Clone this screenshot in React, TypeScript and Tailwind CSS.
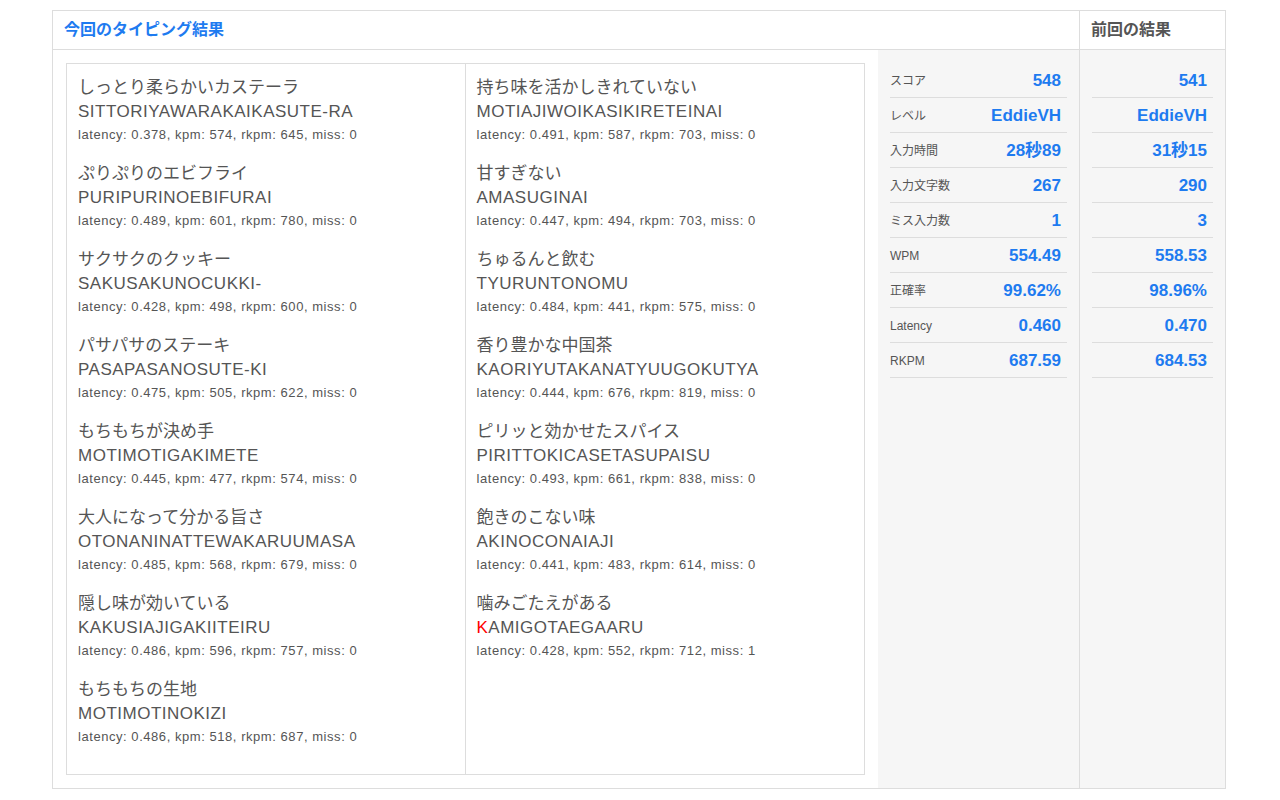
import React from 'react';

const left = [
  { jp: 'しっとり柔らかいカステーラ', ro: 'SITTORIYAWARAKAIKASUTE-RA', st: 'latency: 0.378, kpm: 574, rkpm: 645, miss: 0' },
  { jp: 'ぷりぷりのエビフライ', ro: 'PURIPURINOEBIFURAI', st: 'latency: 0.489, kpm: 601, rkpm: 780, miss: 0' },
  { jp: 'サクサクのクッキー', ro: 'SAKUSAKUNOCUKKI-', st: 'latency: 0.428, kpm: 498, rkpm: 600, miss: 0' },
  { jp: 'パサパサのステーキ', ro: 'PASAPASANOSUTE-KI', st: 'latency: 0.475, kpm: 505, rkpm: 622, miss: 0' },
  { jp: 'もちもちが決め手', ro: 'MOTIMOTIGAKIMETE', st: 'latency: 0.445, kpm: 477, rkpm: 574, miss: 0' },
  { jp: '大人になって分かる旨さ', ro: 'OTONANINATTEWAKARUUMASA', st: 'latency: 0.485, kpm: 568, rkpm: 679, miss: 0' },
  { jp: '隠し味が効いている', ro: 'KAKUSIAJIGAKIITEIRU', st: 'latency: 0.486, kpm: 596, rkpm: 757, miss: 0' },
  { jp: 'もちもちの生地', ro: 'MOTIMOTINOKIZI', st: 'latency: 0.486, kpm: 518, rkpm: 687, miss: 0' },
];

const right = [
  { jp: '持ち味を活かしきれていない', ro: 'MOTIAJIWOIKASIKIRETEINAI', st: 'latency: 0.491, kpm: 587, rkpm: 703, miss: 0' },
  { jp: '甘すぎない', ro: 'AMASUGINAI', st: 'latency: 0.447, kpm: 494, rkpm: 703, miss: 0' },
  { jp: 'ちゅるんと飲む', ro: 'TYURUNTONOMU', st: 'latency: 0.484, kpm: 441, rkpm: 575, miss: 0' },
  { jp: '香り豊かな中国茶', ro: 'KAORIYUTAKANATYUUGOKUTYA', st: 'latency: 0.444, kpm: 676, rkpm: 819, miss: 0' },
  { jp: 'ピリッと効かせたスパイス', ro: 'PIRITTOKICASETASUPAISU', st: 'latency: 0.493, kpm: 661, rkpm: 838, miss: 0' },
  { jp: '飽きのこない味', ro: 'AKINOCONAIAJI', st: 'latency: 0.441, kpm: 483, rkpm: 614, miss: 0' },
  { jp: '噛みごたえがある', ro: 'KAMIGOTAEGAARU', st: 'latency: 0.428, kpm: 552, rkpm: 712, miss: 1', missIdx: 0 },
];

const stats = [
  { label: 'スコア', now: '548', prev: '541' },
  { label: 'レベル', now: 'EddieVH', prev: 'EddieVH' },
  { label: '入力時間', now: '28秒89', prev: '31秒15' },
  { label: '入力文字数', now: '267', prev: '290' },
  { label: 'ミス入力数', now: '1', prev: '3' },
  { label: 'WPM', now: '554.49', prev: '558.53' },
  { label: '正確率', now: '99.62%', prev: '98.96%' },
  { label: 'Latency', now: '0.460', prev: '0.470' },
  { label: 'RKPM', now: '687.59', prev: '684.53' },
];

type Word = { jp: string; ro: string; st: string; missIdx?: number };

const WordItem = ({ w }: { w: Word }) => (
  <div className="mb-[16px]">
    <div className="text-[17px] leading-[24px] text-[#555]">{w.jp}</div>
    <div className="text-[17px] leading-[24px] tracking-[0.5px] text-[#555]">
      {w.missIdx === undefined ? (
        w.ro
      ) : (
        <>
          <span className="text-[#f00]">{w.ro.slice(0, 1)}</span>
          {w.ro.slice(1)}
        </>
      )}
    </div>
    <div className="text-[13px] leading-[22px] tracking-[0.55px] text-[#555]">{w.st}</div>
  </div>
);

export default function App() {
  return (
    <div
      className="min-h-[800px] bg-white pt-[10px] pl-[52px]"
      style={{ fontFamily: '"Liberation Sans", "Noto Sans CJK JP", sans-serif' }}
    >
      <div className="flex w-[1174px] border border-[#ddd]">
        {/* 今回 */}
        <div className="flex w-[1026px] flex-col">
          <div className="flex h-[39px] items-center border-b border-[#ddd] pl-[11px] text-[16px] font-bold text-[#1e7bf0]">
            今回のタイピング結果
          </div>
          <div className="flex">
            <div className="w-[825px] px-[13px] pt-[13px] pb-[13px]">
              <div className="grid h-[712px] grid-cols-2 border border-[#ddd]">
                <div className="border-r border-[#ddd] px-[11px] pt-[12px]">
                  {left.map((w) => (
                    <WordItem key={w.ro} w={w} />
                  ))}
                </div>
                <div className="px-[11px] pt-[12px]">
                  {right.map((w) => (
                    <WordItem key={w.ro} w={w} />
                  ))}
                </div>
              </div>
            </div>
            <div className="flex-1 bg-[#f6f6f6] px-[12px] pt-[13px]">
              {stats.map((s) => (
                <div key={s.label} className="flex h-[35px] items-center justify-between border-b border-[#ddd] pt-[2px] pr-[6px]">
                  <span className="text-[12px] text-[#555]">{s.label}</span>
                  <span className="text-[17px] font-bold text-[#1e7bf0]">{s.now}</span>
                </div>
              ))}
            </div>
          </div>
        </div>
        {/* 前回 */}
        <div className="flex flex-1 flex-col border-l border-[#ddd]">
          <div className="flex h-[39px] items-center border-b border-[#ddd] pl-[11px] text-[16px] font-bold text-[#555]">
            前回の結果
          </div>
          <div className="flex-1 bg-[#f6f6f6] px-[12px] pt-[13px]">
            {stats.map((s) => (
              <div key={s.label} className="flex h-[35px] items-center justify-end border-b border-[#ddd] pt-[2px] pr-[6px]">
                <span className="text-[17px] font-bold text-[#1e7bf0]">{s.prev}</span>
              </div>
            ))}
          </div>
        </div>
      </div>
    </div>
  );
}
